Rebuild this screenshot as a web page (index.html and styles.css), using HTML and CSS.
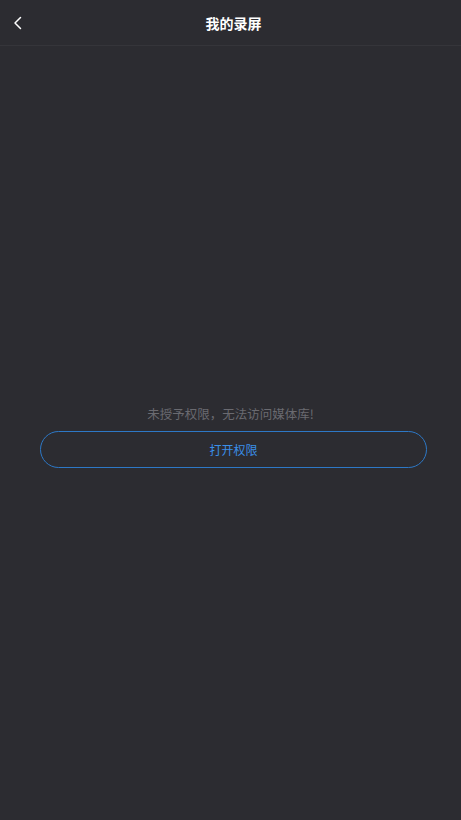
FILE: index.html
```html
<!DOCTYPE html>
<html lang="zh-CN">
<head>
    <meta charset="UTF-8">
    <meta name="viewport" content="width=device-width, initial-scale=1.0">
    <title>我的录屏</title>
    <link rel="stylesheet" href="styles.css">
</head>
<body>
    <div class="page">
        <div class="header">
            <span class="back">
                <svg width="10" height="14" viewBox="0 0 10 14">
                    <path d="M7.5 1.5 L2 7 L7.5 12.5" fill="none" stroke="#ffffff" stroke-width="1.5" stroke-linecap="round" stroke-linejoin="round"/>
                </svg>
            </span>
            <h1 class="title">我的录屏</h1>
        </div>

        <div class="content">
            <p class="tip">未授予权限，无法访问媒体库!</p>
            <button class="open-btn">打开权限</button>
        </div>
    </div>
</body>
</html>
```

FILE: styles.css
```css
body {
    margin: 0;
    background-color: #2c2c31;
    font-family: "Noto Sans CJK SC", "Noto Sans", sans-serif;
}
.page {
    height: 820px;
    display: flex;
    flex-direction: column;
}
.header {
    position: relative;
    height: 45px;
    padding-left: 6px;
    border-bottom: 1px solid #35353a;
    display: flex;
    align-items: center;
    justify-content: center;
}
.back {
    position: absolute;
    left: 13px;
    top: 16px;
    display: flex;
}
.title {
    margin: 0;
    font-size: 14px;
    font-weight: bold;
    color: #ffffff;
}
.content {
    display: flex;
    flex-direction: column;
    align-items: center;
    padding-top: 356px;
}
.tip {
    margin: 0 0 5px 0;
    font-size: 12.5px;
    line-height: 24px;
    color: #6a6a70;
}
.open-btn {
    align-self: stretch;
    margin: 0 34px 0 40px;
    height: 37px;
    border: 1.5px solid #2d78c6;
    border-radius: 20px;
    background: transparent;
    color: #3a8fe8;
    font-family: "Noto Sans CJK SC", "Noto Sans", sans-serif;
    font-size: 12px;
    cursor: pointer;
}
```
